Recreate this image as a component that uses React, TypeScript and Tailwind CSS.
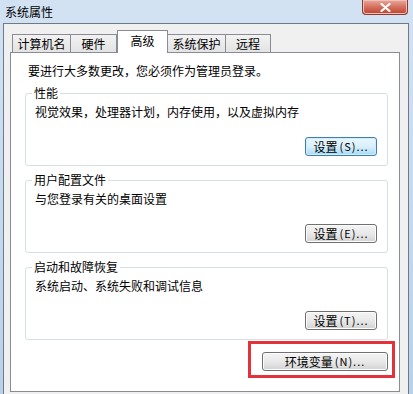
import React from "react";

const cjk = { fontFamily: '"Noto Sans CJK SC", "Liberation Sans", sans-serif' };

const tabs = [
  { label: "计算机名", w: "w-[59px]" },
  { label: "硬件", w: "w-[46px]" },
  { label: "高级", w: "w-[51px]", active: true },
  { label: "系统保护", w: "w-[58px]" },
  { label: "远程", w: "w-[45px]" },
];

function WinButton({ children, focused, className = "" }: { children: React.ReactNode; focused?: boolean; className?: string }) {
  const skin = focused
    ? "border-[#3c7fb1] bg-gradient-to-b from-[#eaf6fd] via-[#d9f0fc] to-[#a7d9f5] shadow-[inset_0_0_0_1px_#d2ecfb]"
    : "border-[#707070] bg-gradient-to-b from-[#f4f4f4] via-[#e9e9e9] to-[#d3d3d3] shadow-[inset_0_0_0_1px_#fcfcfc]";
  return (
    <button
      className={`flex h-[19px] items-center justify-center rounded-[3px] border text-[12px] leading-none text-black ${skin} ${className}`}
    >
      {children}
    </button>
  );
}

// label like 设置(S)... with the latin part spaced out, as the dialog font draws it
function Caption({ cn, key2 }: { cn: string; key2: string }) {
  return (
    <span className="flex items-center">
      <span>{cn}</span>
      <span className="ml-[2px] text-[11px] tracking-[1px]">({key2})...</span>
    </span>
  );
}

function Group({ title, desc, btn, focused }: { title: string; desc: string; btn: string; focused?: boolean }) {
  return (
    <fieldset className="rounded-[3px] border border-[#d5dfe5] pb-[9px]">
      <legend className="ml-[6px] px-[2px] text-[12px] leading-[14px] text-black">{title}</legend>
      <div className="pl-[9px] pt-[5px] text-[12px] leading-[14px] text-black">{desc}</div>
      <div className="mt-[18px] flex justify-end pr-[10px]">
        <WinButton focused={focused} className="w-[72px]">
          <Caption cn="设置" key2={btn} />
        </WinButton>
      </div>
    </fieldset>
  );
}

export default function App() {
  return (
    <div style={cjk} className="flex h-[394px] w-[413px] flex-col overflow-hidden bg-gradient-to-b from-[#d3e2f3] to-[#b9d1ea]">
      {/* title bar */}
      <div className="flex h-[23px] shrink-0 items-start justify-between">
        <div className="pl-[5px] pt-[4px] text-[12px] leading-[15px] text-black">系统属性</div>
        <div className="mr-[5px] flex h-[15px] w-[46px] items-center justify-center rounded-b-[4px] border border-t-0 border-[#8b3a30] bg-gradient-to-b from-[#e9a99c] via-[#d3705f] to-[#c0402e] shadow-[inset_0_0_0_1px_#f0c0b8]">
          <svg width="11" height="9" viewBox="0 0 11 9">
            <path d="M1.5 1 L9.5 8 M9.5 1 L1.5 8" stroke="#ffffff" strokeWidth="2.2" strokeLinecap="round" />
          </svg>
        </div>
      </div>

      {/* client area */}
      <div className="ml-[3px] mr-[4px] flex flex-1 flex-col border border-b-0 border-[#6d7a88] bg-[#f0f0f0] pl-[6px] pr-[8px] pt-[6px]">
        <div className="flex items-end pl-[2px]">
          {tabs.map((t) =>
            t.active ? (
              <div
                key={t.label}
                className={`relative z-10 -mb-px flex h-[23px] ${t.w} items-start justify-center border border-b-0 border-[#898c95] bg-white pt-[3px] text-[12px] leading-[14px] text-black`}
              >
                {t.label}
              </div>
            ) : (
              <div
                key={t.label}
                className={`flex h-[18px] ${t.w} items-center justify-center border border-b-0 border-l-0 first:border-l border-[#898c95] bg-gradient-to-b from-[#f2f2f2] to-[#e3e3e3] text-[12px] leading-[14px] text-black`}
              >
                {t.label}
              </div>
            ),
          )}
        </div>

        <div className="h-[340px] w-[390px] shrink-0 border border-[#898c95] bg-white pl-[14px] pr-[11px] pt-[11px]">
          <div className="pl-[3px] text-[12px] leading-[14px] text-black">要进行大多数更改，您必须作为管理员登录。</div>
          <div className="mt-[8px] flex flex-col gap-[7px]">
            <Group title="性能" desc="视觉效果，处理器计划，内存使用，以及虚拟内存" btn="S" focused />
            <Group title="用户配置文件" desc="与您登录有关的桌面设置" btn="E" />
            <Group title="启动和故障恢复" desc="系统启动、系统失败和调试信息" btn="T" />
          </div>
          <div className="mt-[12px] flex justify-end">
            <div className="relative">
              <WinButton className="w-[126px]">
                <Caption cn="环境变量" key2="N" />
              </WinButton>
              <div className="pointer-events-none absolute -bottom-[7px] -left-[14px] -right-[7px] -top-[11px] border-[3px] border-[#e3323a]" />
            </div>
          </div>
        </div>
      </div>
    </div>
  );
}
